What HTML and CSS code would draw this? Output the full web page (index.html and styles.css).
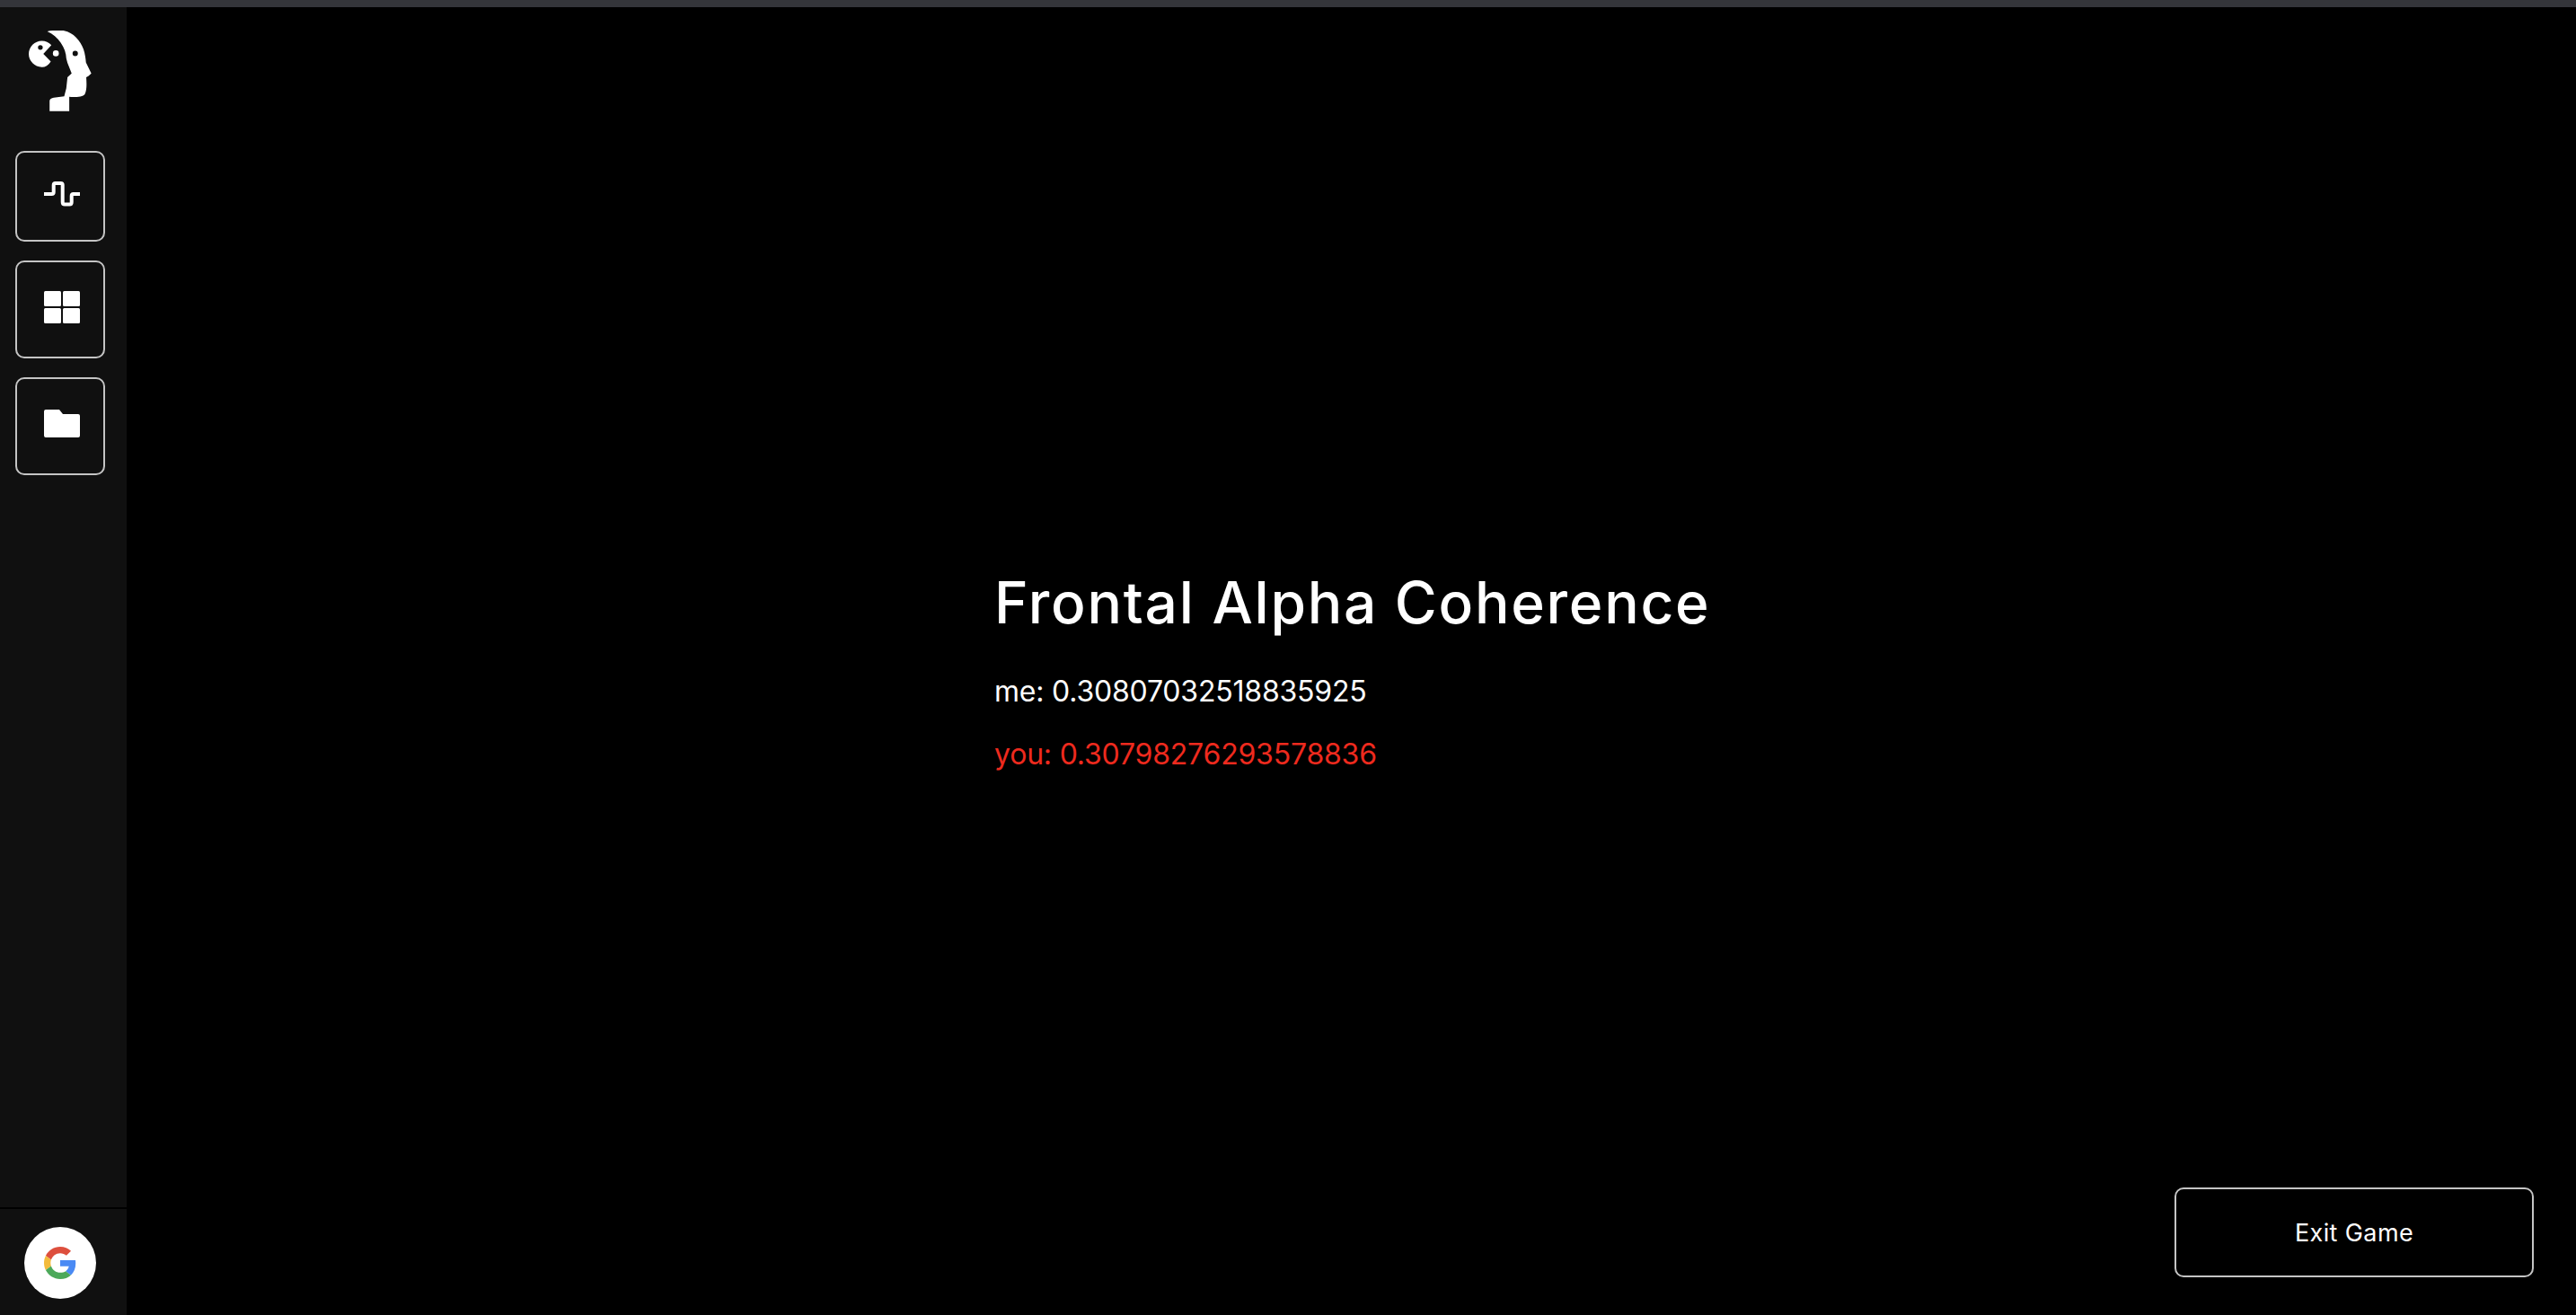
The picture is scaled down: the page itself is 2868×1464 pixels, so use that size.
FILE: index.html
```html
<!DOCTYPE html>
<html>
<head>
    <title>Frontal Alpha Coherence</title>
    <link rel="stylesheet" href="styles.css">
</head>
<body>
    <div class="top-bar"></div>
    <div class="app">
        <aside class="sidebar">
            <div class="logo">
                <svg width="70" height="90" viewBox="96 102 211 270">
                    <path fill="#fff" fill-rule="evenodd" d="M158 104 C175 100 200 100 215 102 C245 108 270 135 280 165 C285 180 287 195 288 208 L306 245 L296 254 L289 258 C290 275 292 300 284 315 C278 324 250 326 232 324 L232 372 L166 372 L166 338 C166 332 172 328 180 327 L215 322 L222 295 L226 258 L240 245 L226 210 L222 195 C222 160 195 120 158 104 Z M252 169 A9 9 0 1 0 252 187 A9 9 0 1 0 252 169 Z"/>
                    <path fill="#fff" fill-rule="evenodd" d="M140 136 C152 136 164 141 172 150 L145 180 L170 205 C162 217 152 224 140 224 C116 224 96 204 96 180 C96 156 116 136 140 136 Z M135 150 A8 8 0 1 0 135 166 A8 8 0 1 0 135 150 Z"/>
                    <circle fill="#fff" cx="187" cy="178" r="10"/>
                </svg>
            </div>
            <nav class="nav">
                <button class="nav-btn nav-btn-short">
                    <svg width="40" height="28" viewBox="0 0 40 28"><path fill="none" stroke="#fff" stroke-width="4" d="M0 14 H8.5 Q10.7 14 10.7 12 V4 Q10.7 2 12.7 2 H18.7 Q20.7 2 20.7 4 V23 Q20.7 25.5 23 25.5 H28.5 Q30.7 25.5 30.7 23 V16 Q30.7 14 32.7 14 H40"/></svg>
                </button>
                <button class="nav-btn">
                    <svg width="40" height="36" viewBox="0 0 40 36">
                        <rect x="0" y="0" width="19" height="17" rx="1.5" fill="#fff"/>
                        <rect x="21" y="0" width="19" height="17" rx="1.5" fill="#fff"/>
                        <rect x="0" y="19" width="19" height="17" rx="1.5" fill="#fff"/>
                        <rect x="21" y="19" width="19" height="17" rx="1.5" fill="#fff"/>
                    </svg>
                </button>
                <button class="nav-btn">
                    <svg width="40" height="31" viewBox="0 0 40 31"><path fill="#fff" d="M2 0 H17 L21 5 H38 A2 2 0 0 1 40 7 V29 A2 2 0 0 1 38 31 H2 A2 2 0 0 1 0 29 V2 A2 2 0 0 1 2 0 Z"/></svg>
                </button>
            </nav>
            <div class="account">
                <div class="google-btn">
                    <svg width="36" height="36" viewBox="0 0 48 48">
                        <path fill="#dd4f3d" d="M24 9.5c3.54 0 6.71 1.22 9.21 3.6l6.85-6.85C35.9 2.38 30.47 0 24 0 14.62 0 6.51 5.38 2.56 13.22l7.98 6.19C12.43 13.72 17.74 9.5 24 9.5z"/>
                        <path fill="#4a8af4" d="M46.98 24.55c0-1.57-.15-3.09-.38-4.55H24v9.02h12.94c-.58 2.96-2.26 5.48-4.78 7.18l7.73 6c4.51-4.18 7.09-10.36 7.09-17.65z"/>
                        <path fill="#f3bb3c" d="M10.53 28.59c-.48-1.45-.76-2.99-.76-4.59s.27-3.14.76-4.59l-7.98-6.19C.92 16.46 0 20.12 0 24c0 3.88.92 7.54 2.56 10.78l7.97-6.19z"/>
                        <path fill="#4ca95a" d="M24 48c6.48 0 11.93-2.13 15.89-5.81l-7.73-6c-2.15 1.45-4.92 2.3-8.16 2.3-6.26 0-11.57-4.22-13.47-9.91l-7.98 6.19C6.51 42.62 14.62 48 24 48z"/>
                    </svg>
                </div>
            </div>
        </aside>
        <main class="main">
            <section class="scores">
                <h1 class="scores-title">Frontal Alpha Coherence</h1>
                <p class="score">me: 0.30807032518835925</p>
                <p class="score score-you">you: 0.30798276293578836</p>
            </section>
            <button class="exit-btn">Exit Game</button>
        </main>
    </div>
</body>
</html>
```

FILE: styles.css
```css
* {
    box-sizing: border-box;
}

html, body {
    height: 100%;
}

body {
    margin: 0;
    background-color: #000;
    color: #fff;
    font-family: 'Inter', sans-serif;
    overflow: hidden;
}

.top-bar {
    height: 8px;
    background-color: #34353a;
}

.app {
    display: flex;
    height: calc(100% - 8px);
}

.sidebar {
    width: 141px;
    flex-shrink: 0;
    display: flex;
    flex-direction: column;
    background-color: #101010;
}

.logo {
    display: flex;
    padding: 26px 0 0 32px;
}

.nav {
    display: flex;
    flex-direction: column;
    gap: 21px;
    margin: 44px 24px 0 17px;
}

.nav-btn {
    display: flex;
    align-items: center;
    justify-content: center;
    height: 109px;
    padding: 0 0 6px 4px;
    background: none;
    border: 2px solid #c4c4c4;
    border-radius: 10px;
}

.nav-btn-short {
    height: 101px;
}

.account {
    display: flex;
    justify-content: center;
    margin-top: auto;
    padding: 20px 7px 18px 0;
    border-top: 2px solid #000;
}

.google-btn {
    display: flex;
    align-items: center;
    justify-content: center;
    width: 80px;
    height: 80px;
    border-radius: 50%;
    background-color: #fff;
}

.main {
    flex: 1;
    display: flex;
    flex-direction: column;
    padding: 0 47px 42px 0;
}

.scores {
    margin: 623px 0 0 966px;
}

.scores-title {
    margin: 0 0 41px;
    font-size: 64px;
    font-weight: 500;
    line-height: 80px;
    letter-spacing: 1.75px;
}

.score {
    margin: 0 0 34px;
    font-size: 32px;
    line-height: 36px;
    letter-spacing: -0.2px;
}

.score-you {
    color: #ee2a1e;
}

.exit-btn {
    align-self: flex-end;
    width: 400px;
    height: 100px;
    margin-top: auto;
    background: none;
    border: 2px solid #c4c4c4;
    border-radius: 10px;
    color: #fff;
    font-family: inherit;
    font-size: 27px;
    letter-spacing: 0.4px;
}
```
